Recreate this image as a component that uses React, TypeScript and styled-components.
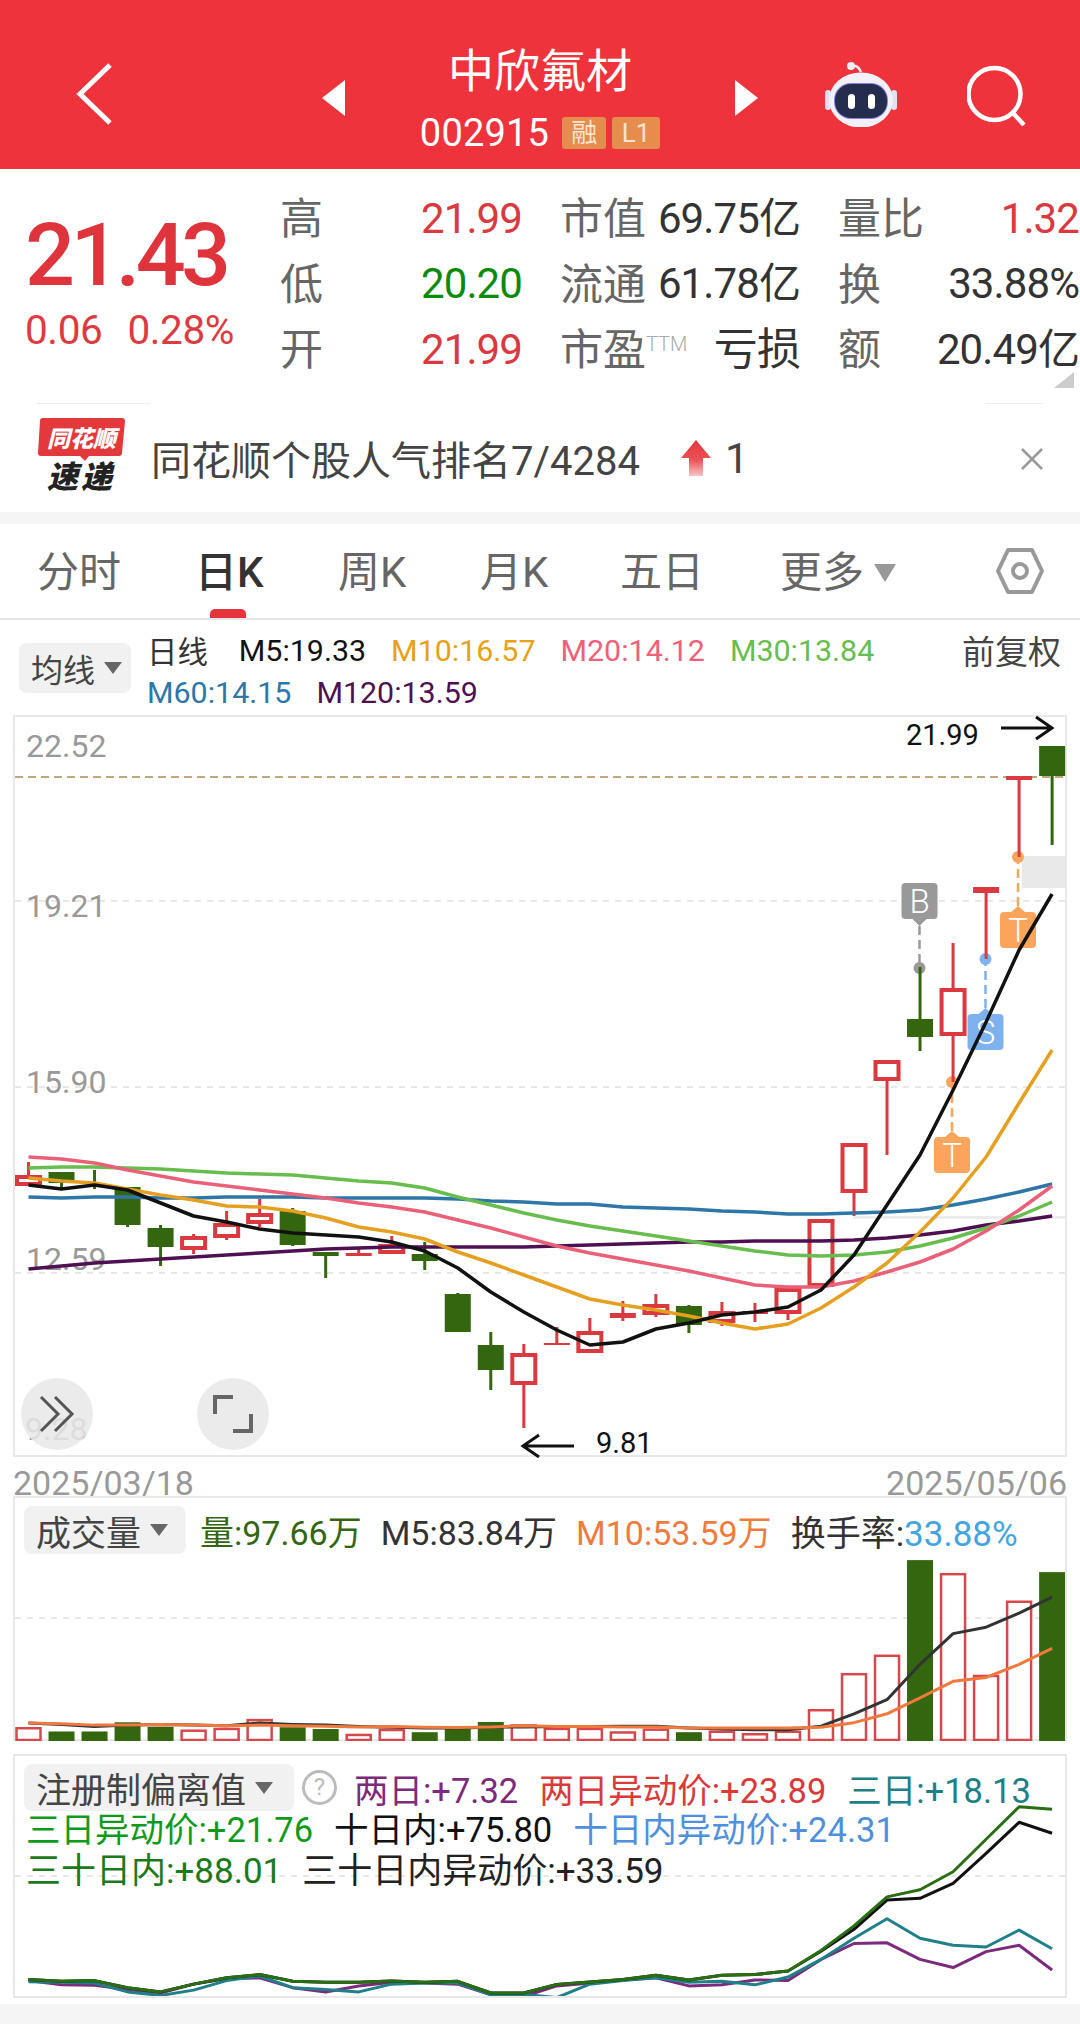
import React from "react";
import styled, { createGlobalStyle } from "styled-components";

const GlobalStyle = createGlobalStyle`
  html, body { margin: 0; padding: 0; background: #ffffff; }
  * { box-sizing: border-box; }
  body { font-family: Roboto, "Noto Sans CJK SC", sans-serif; color: #333333; }
`;

const RED = "#d9393f";
const GREEN = "#346610";

const Page = styled.div`
  width: 1080px;
  height: 2024px;
  overflow: hidden;
  background: #ffffff;
`;

/* ---------- header ---------- */
const Header = styled.header`
  height: 169px;
  background: #ef333c;
  display: grid;
  grid-template-columns: 322px 436px 322px;
  color: #ffffff;
`;

const BackSlot = styled.div`
  padding: 63px 0 0 76px;
`;

const TitleSlot = styled.div`
  display: flex;
  justify-content: space-between;
  align-items: flex-start;
`;

const Tri = styled.span<{ $dir: "left" | "right" }>`
  width: 0;
  height: 0;
  margin-top: 80px;
  border-top: 18px solid transparent;
  border-bottom: 18px solid transparent;
  ${(p) => (p.$dir === "left" ? "border-right: 23px solid #fff;" : "border-left: 23px solid #fff;")}
`;

const TitleBlock = styled.div`
  padding-top: 45px;
  display: flex;
  flex-direction: column;
  align-items: center;
`;

const StockName = styled.div`
  font-size: 46px;
  line-height: 52px;
`;

const CodeRow = styled.div`
  margin-top: 17px;
  display: flex;
  align-items: center;
  gap: 6px;
`;

const StockCode = styled.span`
  font-size: 38px;
  line-height: 38px;
  letter-spacing: 0.2px;
  margin-right: 7px;
`;

const Badge = styled.span<{ $w: number }>`
  width: ${(p) => p.$w}px;
  height: 32px;
  border-radius: 3px;
  background: #e58d4c;
  color: #fbe3cf;
  font-size: 26px;
  line-height: 32px;
  text-align: center;
`;

const ActionSlot = styled.div`
  padding: 62px 0 0 67px;
  display: flex;
  align-items: flex-start;
  gap: 70px;
`;

/* ---------- quote ---------- */
const Quote = styled.section`
  height: 235px;
  position: relative;
  display: flex;
`;

const PriceCol = styled.div`
  width: 280px;
  padding: 44px 0 0 25px;
`;

const Price = styled.div`
  font-size: 88px;
  line-height: 84px;
  font-weight: 500;
  letter-spacing: -4.6px;
  color: #e0343c;
`;

const Change = styled.div`
  margin-top: 13px;
  display: flex;
  gap: 25px;
  font-size: 40.5px;
  line-height: 40px;
  letter-spacing: -0.4px;
  color: #dd3b41;
`;

const StatGrid = styled.div`
  padding-top: 15px;
  display: grid;
  grid-template-columns: 242px 240px 241px;
  column-gap: 38px;
  grid-auto-rows: 65.5px;
  width: 800px;
`;

const StatCell = styled.div`
  display: flex;
  justify-content: space-between;
  align-items: center;
  white-space: nowrap;
`;

const StatLabel = styled.span`
  font-size: 43px;
  line-height: 60px;
  margin-top: 5px;
  color: #666666;
`;

const Ttm = styled.sup`
  font-size: 20px;
  font-weight: 300;
  color: #aaaaaa;
  vertical-align: 14px;
  line-height: 0;
`;

const StatValue = styled.span<{ $color?: string; $size?: number }>`
  font-size: ${(p) => p.$size ?? 42}px;
  line-height: 60px;
  margin-top: 4px;
  letter-spacing: -0.9px;
  color: ${(p) => p.$color ?? "#333333"};
`;

const CornerFold = styled.span`
  position: absolute;
  right: 6px;
  bottom: 16px;
  width: 0;
  height: 0;
  border-left: 20px solid transparent;
  border-bottom: 16px solid #cccccc;
`;

const ShortRule = styled.span<{ $left: number; $width: number }>`
  position: absolute;
  bottom: 0;
  left: ${(p) => p.$left}px;
  width: ${(p) => p.$width}px;
  height: 1px;
  background: #eeeeee;
`;

/* ---------- news strip ---------- */
const News = styled.section`
  height: 108px;
  padding-left: 37px;
  display: flex;
  align-items: center;
  position: relative;
`;

const LogoText = styled.text<{ $fill: string; $size: number; $track?: number }>`
  font-family: "Noto Sans CJK SC", sans-serif;
  font-weight: 900;
  font-style: italic;
  font-size: ${(p) => p.$size}px;
  letter-spacing: ${(p) => p.$track ?? 0}px;
  fill: ${(p) => p.$fill};
`;

const NewsText = styled.span`
  margin-left: 24px;
  font-size: 40px;
  color: #444444;
  white-space: nowrap;
`;

const NewsArrow = styled.svg`
  margin-left: 41px;
`;

const NewsCount = styled.span`
  margin-left: 14px;
  font-size: 42px;
  color: #444444;
`;

const CloseIcon = styled.svg`
  position: absolute;
  right: 36px;
  top: 43px;
`;

const Band = styled.div<{ $h: number; $mt?: number }>`
  height: ${(p) => p.$h}px;
  margin-top: ${(p) => p.$mt ?? 0}px;
  background: #f5f5f5;
`;

/* ---------- tabs ---------- */
const Tabs = styled.nav`
  height: 96px;
  padding-left: 37px;
  border-bottom: 2px solid #e6e6e6;
  display: grid;
  grid-template-columns: 158px 143px 142px 140px 160px 215px 1fr;
  align-items: center;
  position: relative;
`;

const Tab = styled.span<{ $active?: boolean }>`
  font-size: 42px;
  line-height: 48px;
  margin-top: 4px;
  display: inline-flex;
  align-items: center;
  color: ${(p) => (p.$active ? "#333333" : "#666666")};
  font-weight: ${(p) => (p.$active ? 500 : 400)};
`;

const TabCaret = styled.span`
  margin-left: 10px;
  width: 0;
  height: 0;
  border-left: 11px solid transparent;
  border-right: 11px solid transparent;
  border-top: 18px solid #999999;
`;

const TabMark = styled.span`
  position: absolute;
  left: 210px;
  bottom: 0;
  width: 36px;
  height: 9px;
  border-radius: 5px 5px 0 0;
  background: #e5343c;
`;

const HexIcon = styled.svg`
  margin-left: 1px;
`;

/* ---------- ma legend ---------- */
const MaLegend = styled.section`
  height: 95px;
  padding: 23px 19px 0;
  display: flex;
  align-items: flex-start;
`;

const Dropdown = styled.div<{ $w: number; $h: number; $size: number }>`
  width: ${(p) => p.$w}px;
  height: ${(p) => p.$h}px;
  flex: none;
  padding-left: 12px;
  border-radius: 8px;
  background: #f1f1f1;
  display: flex;
  align-items: center;
  font-size: ${(p) => p.$size}px;
  color: #444444;
  white-space: nowrap;
`;

const DropCaret = styled.span`
  margin-left: 9px;
  width: 0;
  height: 0;
  border-left: 9px solid transparent;
  border-right: 9px solid transparent;
  border-top: 12px solid #666666;
`;

const MaRows = styled.div`
  margin: -14px 0 0 16px;
  flex: 1;
`;

const MaRow = styled.div`
  height: 42px;
  display: flex;
  align-items: center;
  gap: 25px;
  white-space: nowrap;
  font-size: 30.4px;
`;

const MaItem = styled.span<{ $color: string }>`
  color: ${(p) => p.$color};
`;

const MaKind = styled.span`
  margin-right: 6px;
  color: #333333;
`;

const MaRight = styled.span`
  margin-left: auto;
  color: #444444;
  font-size: 33px;
`;

/* ---------- charts ---------- */
const ChartBox = styled.div`
  position: relative;
  margin: 0 13px;
  height: 742px;
  border: 2px solid #e8e8e8;
  svg { display: block; overflow: visible; }
`;

const AxisText = styled.text`
  font-size: 32px;
  fill: #999999;
`;

const NoteText = styled.text`
  font-size: 29px;
  fill: #111111;
`;

const MarkerText = styled.text`
  font-size: 33px;
  font-weight: 300;
  fill: #ffffff;
  text-anchor: middle;
`;

const RoundBtn = styled.div<{ $left: number }>`
  position: absolute;
  left: ${(p) => p.$left}px;
  top: 661px;
  width: 72px;
  height: 72px;
  border-radius: 50%;
  background: rgba(232, 232, 232, 0.85);
  display: flex;
  align-items: center;
  justify-content: center;
`;

const DateRow = styled.div`
  height: 39px;
  margin: 0 13px;
  padding-top: 7px;
  display: flex;
  justify-content: space-between;
  align-items: flex-start;
  font-size: 34px;
  line-height: 38px;
  color: #999999;
`;

const SubPanel = styled.div<{ $h: number; $mt: number }>`
  position: relative;
  margin: ${(p) => p.$mt}px 13px 0;
  height: ${(p) => p.$h}px;
  border: 2px solid #e8e8e8;
  svg { position: absolute; left: 0; top: 0; }
`;

const PanelRows = styled.div`
  position: relative;
  padding: 8px 0 0 9px;
`;

const PanelRow = styled.div<{ $h?: number; $pl?: number; $mt?: number; $size?: number; $gap?: number }>`
  display: flex;
  align-items: center;
  gap: ${(p) => p.$gap ?? 21}px;
  white-space: nowrap;
  height: ${(p) => p.$h ?? 39}px;
  margin-top: ${(p) => p.$mt ?? 0}px;
  padding-left: ${(p) => p.$pl ?? 0}px;
  font-size: ${(p) => p.$size ?? 34.5}px;
`;

const PanelText = styled.span<{ $color: string }>`
  color: ${(p) => p.$color};
`;

const TurnoverGroup = styled.span`
  font-size: 35px;
`;

const VolumeDrop = styled(Dropdown)`
  margin-right: -5px;
`;

const HelpDot = styled.span`
  width: 35px;
  height: 35px;
  margin: 0 -4px 0 -13px;
  border: 3px solid #bbbbbb;
  border-radius: 50%;
  color: #bbbbbb;
  font-size: 24px;
  line-height: 29px;
  text-align: center;
`;

/* ---------- chart data, page coordinates ---------- */
const cx = (i: number) => 28.5 + 33.02 * i;
const pts = (ys: number[]) => ys.map((y, i) => `${cx(i).toFixed(1)},${y}`).join(" ");

// [up, bodyTop, bodyBottom, high, low]
const candles: [boolean, number, number, number, number][] = [
  [true, 1175, 1186, 1162, 1186], [false, 1172, 1183, 1172, 1189], [false, 1184, 1185, 1170, 1189],
  [false, 1187, 1225, 1187, 1227], [false, 1228, 1247, 1225, 1266], [true, 1236, 1250, 1234, 1254],
  [true, 1223, 1238, 1211, 1240], [true, 1213, 1224, 1199, 1227], [false, 1211, 1245, 1208, 1246],
  [false, 1252, 1256, 1252, 1278], [true, 1253, 1256, 1247, 1256], [true, 1244, 1254, 1236, 1254],
  [false, 1254, 1261, 1242, 1270], [false, 1294, 1332, 1293, 1332], [false, 1345, 1370, 1332, 1390],
  [true, 1353, 1385, 1344, 1428], [true, 1343, 1345, 1327, 1345], [true, 1331, 1353, 1318, 1353],
  [true, 1313, 1318, 1301, 1321], [true, 1304, 1315, 1294, 1317], [false, 1306, 1325, 1305, 1333],
  [true, 1311, 1323, 1302, 1326], [true, 1311, 1314, 1303, 1322], [true, 1288, 1314, 1288, 1320],
  [true, 1219, 1287, 1219, 1287], [true, 1143, 1193, 1143, 1216], [true, 1060, 1081, 1060, 1155],
  [false, 1019, 1037, 967, 1051], [true, 988, 1036, 943, 1082], [true, 887, 893, 887, 959],
  [true, 776, 780, 778, 857], [false, 746, 776, 746, 845],
];

const m5 = [1185,1189,1185,1190,1203,1216,1222,1229,1233,1235,1237,1242,1251,1268,1292,1312,1330,1345,1342,1329,1323,1315,1312,1307,1290,1255,1205,1155,1090,1022,950,894];
const m10 = [1178,1181,1183,1189,1195,1200,1206,1207,1211,1218,1227,1232,1239,1252,1263,1275,1287,1299,1305,1310,1316,1323,1329,1324,1308,1287,1263,1232,1198,1157,1103,1050];
const m20 = [1157,1159,1163,1170,1176,1182,1186,1190,1194,1198,1203,1207,1212,1220,1228,1237,1246,1253,1259,1265,1271,1278,1285,1287,1287,1281,1272,1262,1249,1231,1210,1186];
const m30 = [1168,1167,1167,1168,1169,1171,1173,1174,1175,1178,1181,1183,1188,1197,1205,1213,1220,1226,1231,1236,1241,1246,1251,1255,1256,1255,1252,1246,1238,1228,1216,1202];
const m60 = [1197,1198,1197,1197,1198,1198,1197,1197,1197,1198,1198,1198,1198,1199,1201,1202,1204,1204,1207,1208,1209,1211,1212,1214,1214,1213,1212,1210,1205,1199,1192,1184];
const m120 = [1269,1266,1263,1261,1259,1257,1255,1253,1251,1249,1248,1247,1247,1247,1247,1247,1246,1245,1244,1243,1242,1242,1241,1241,1241,1240,1238,1235,1231,1225,1221,1216];

// volume: [up, top in zoom units]
const vTop = (v: number) => 1470 + v / 2.83;
const volumes: [boolean, number][] = [
  [true,728],[false,740],[false,740],[false,714],[false,727],[true,735],[true,730],[true,705],
  [false,728],[false,733],[true,747],[true,733],[false,742],[false,733],[false,713],[true,720],
  [true,730],[true,730],[true,740],[true,732],[false,742],[true,738],[true,745],[true,738],
  [true,677],[true,575],[true,523],[false,255],[true,292],[true,580],[true,370],[false,289],
];
const vm5 = [716,720,726,722,720,722,724,716,720,722,726,728,730,730,728,727,726,726,725,725,730,733,735,735,725,690,650,550,463,445,405,360].map(vTop);
const vm10 = [716,718,722,722,720,722,724,722,724,725,727,726,728,729,727,724,726,726,727,727,730,730,730,730,728,715,690,645,598,587,550,505].map(vTop);

const dGreen = [1442,1447,1445,1465,1477,1455,1437,1428,1447,1450,1450,1446,1450,1447,1480,1480,1456,1449,1442,1430,1443,1430,1428,1418,1360,1290,1208,1188,1137,1045,953,960].map(vTop);
const dBlack = [1442,1447,1445,1465,1477,1455,1437,1428,1447,1450,1450,1446,1450,1447,1480,1480,1456,1449,1442,1430,1443,1430,1428,1418,1362,1300,1217,1212,1170,1085,997,1028].map(vTop);
const dTeal = [1448,1450,1452,1477,1487,1472,1445,1432,1465,1470,1477,1455,1452,1452,1485,1484,1493,1455,1445,1437,1450,1447,1457,1435,1385,1325,1270,1325,1345,1350,1302,1355].map(vTop);
const dPurple = [1445,1457,1458,1470,1480,1455,1440,1437,1465,1477,1460,1450,1452,1455,1485,1490,1460,1452,1443,1437,1460,1457,1443,1445,1385,1340,1338,1385,1408,1363,1345,1415].map(vTop);

const MaLine = ({ ys, color, w = 3.5 }: { ys: number[]; color: string; w?: number }) => (
  <polyline points={pts(ys)} fill="none" stroke={color} strokeWidth={w} strokeLinejoin="round" />
);

const Candle = ({ i, c }: { i: number; c: [boolean, number, number, number, number] }) => {
  const [up, top, bottom, high, low] = c;
  const x = cx(i);
  const color = up ? RED : GREEN;
  const flat = bottom - top < 8;
  return (
    <g>
      <line x1={x} x2={x} y1={high} y2={low} stroke={color} strokeWidth={3} />
      {i === 2 ? null : up && !flat ? (
        <rect x={x - 11.5} y={top + 2} width={23} height={bottom - top - 4} fill="#fff" stroke={color} strokeWidth={4} />
      ) : (
        <rect x={x - 13} y={top} width={26} height={bottom - top} fill={color} />
      )}
    </g>
  );
};

const Marker = ({ x, top, label, color, dotY, below }: { x: number; top: number; label: string; color: string; dotY: number; below?: boolean }) => {
  const tip = below ? `${x - 7},${top + 36} ${x + 7},${top + 36} ${x},${top + 43}` : `${x - 7},${top} ${x + 7},${top} ${x},${top - 6}`;
  return (
    <g>
      <line x1={x} x2={x} y1={below ? top + 43 : top - 6} y2={dotY} stroke={color} strokeWidth={2.5} strokeDasharray="9 5" />
      <circle cx={x} cy={dotY} r={6} fill={color} />
      <rect x={x - 18} y={top} width={36} height={36} rx={4} fill={color} />
      <polygon points={tip} fill={color} />
      <MarkerText x={x} y={top + 30}>{label}</MarkerText>
    </g>
  );
};

const KlineChart = () => (
  <svg width={1050} height={738} viewBox="15 717 1050 738">
    {[901, 1087, 1273].map((y) => (
      <line key={y} x1={15} x2={1065} y1={y} y2={y} stroke="#e8e8e8" strokeWidth={2} strokeDasharray="6 6" />
    ))}
    <AxisText x={26} y={757}>22.52</AxisText>
    <AxisText x={26} y={917}>19.21</AxisText>
    <AxisText x={26} y={1093}>15.90</AxisText>
    <AxisText x={26} y={1270}>12.59</AxisText>
    <AxisText x={25} y={1440}>9.28</AxisText>
    <rect x={1022} y={856} width={43} height={32} fill="#e9e9e9" />
    <rect x={853} y={1216} width={212} height={3} fill="#ececec" />
    <line x1={15} x2={1065} y1={777} y2={777} stroke="#c4a67c" strokeWidth={2} strokeDasharray="8 5" />

    <Marker x={919.5} top={883} label="B" color="#999999" dotY={968} below />
    <Marker x={1018} top={912} label="T" color="#fba55c" dotY={857} />
    <Marker x={985.5} top={1014} label="S" color="#7eb2ef" dotY={959} />
    <Marker x={952} top={1137} label="T" color="#fba55c" dotY={1082} />

    {candles.map((c, i) => (
      <Candle key={i} i={i} c={c} />
    ))}

    <MaLine ys={m120} color="#4f1052" />
    <MaLine ys={m60} color="#2f76a8" />
    <MaLine ys={m30} color="#68bd4f" />
    <MaLine ys={m20} color="#ea6079" />
    <MaLine ys={m10} color="#e5a021" />
    <MaLine ys={m5} color="#111111" />

    <NoteText x={906} y={745}>21.99</NoteText>
    <path d="M1001 728H1051M1036 717L1052 728L1036 739" fill="none" stroke="#111" strokeWidth={3} />
    <NoteText x={596} y={1453}>9.81</NoteText>
    <path d="M574 1446H524M539 1435L523 1446L539 1457" fill="none" stroke="#111" strokeWidth={3} />
  </svg>
);

const VolumeChart = () => (
  <svg width={1050} height={243} viewBox="15 1498 1050 243">
    <line x1={15} x2={1065} y1={1618} y2={1618} stroke="#e8e8e8" strokeWidth={2} strokeDasharray="6 6" />
    {volumes.map(([up, v], i) => {
      const x = cx(i);
      const top = vTop(v);
      return up ? (
        <rect key={i} x={x - 12} y={top + 1} width={24} height={1741 - top - 2} fill="#fff" stroke="#d8474c" strokeWidth={2.5} />
      ) : (
        <rect key={i} x={x - 13} y={top} width={26} height={1741 - top} fill={GREEN} />
      );
    })}
    <MaLine ys={vm5} color="#333333" w={3} />
    <MaLine ys={vm10} color="#f0793d" w={3} />
  </svg>
);

const DeviationChart = () => (
  <svg width={1050} height={240} viewBox="15 1756 1050 240">
    <line x1={15} x2={1065} y1={1876} y2={1876} stroke="#e8e8e8" strokeWidth={2} strokeDasharray="6 6" />
    <MaLine ys={dPurple} color="#7c2a7e" w={3} />
    <MaLine ys={dTeal} color="#1f808a" w={3} />
    <MaLine ys={dBlack} color="#111111" w={3} />
    <MaLine ys={dGreen} color="#2a6e14" w={3} />
  </svg>
);

const RobotIcon = () => (
  <svg width={72} height={65} viewBox="0 0 72 65">
    <path d="M24 7C28 2 33 3 36 10" fill="none" stroke="#f4eaf2" strokeWidth={2.5} />
    <circle cx={26} cy={4} r={4} fill="#f6eef4" />
    <rect x={0} y={28} width={6} height={20} rx={3} fill="#e4e0f2" />
    <rect x={66} y={28} width={6} height={20} rx={3} fill="#e4e0f2" />
    <ellipse cx={36} cy={38} rx={32} ry={27.5} fill="#f3f0f8" />
    <rect x={9} y={21} width={54} height={36} rx={17} fill="#8a7fe0" />
    <rect x={10} y={22} width={52} height={34} rx={16} fill="#242d4d" />
    <rect x={23} y={32} width={7} height={15} rx={3.5} fill="#fff" />
    <rect x={43} y={32} width={7} height={15} rx={3.5} fill="#fff" />
  </svg>
);

const SearchIcon = () => (
  <svg width={60} height={64} viewBox="0 0 60 64">
    <circle cx={27.5} cy={32} r={26} fill="none" stroke="#fff" strokeWidth={4.5} />
    <line x1={46} y1={51} x2={57} y2={63} stroke="#fff" strokeWidth={4.5} />
  </svg>
);

const NewsLogo = () => (
  <svg width={90} height={84} viewBox="37 420 90 84">
    <path d="M43 422H122Q125 422 125 425L122 457Q122 460 119 460H89L85 465L80 460H41Q38 460 38 457L40 425Q40 422 43 422Z" fill="#e4393c" />
    <LogoText x={47} y={451} $fill="#ffffff" $size={23}>同花顺</LogoText>
    <LogoText x={47} y={492} $fill="#222222" $size={31} $track={3}>速递</LogoText>
  </svg>
);

export default function App() {
  return (
    <Page>
      <GlobalStyle />
      <Header>
        <BackSlot>
          <svg width={36} height={62} viewBox="0 0 36 62">
            <path d="M34 2L4 31L34 60" fill="none" stroke="#fff" strokeWidth={5} />
          </svg>
        </BackSlot>
        <TitleSlot>
          <Tri $dir="left" />
          <TitleBlock>
            <StockName>中欣氟材</StockName>
            <CodeRow>
              <StockCode>002915</StockCode>
              <Badge $w={44}>融</Badge>
              <Badge $w={48}>L1</Badge>
            </CodeRow>
          </TitleBlock>
          <Tri $dir="right" />
        </TitleSlot>
        <ActionSlot>
          <RobotIcon />
          <SearchIcon />
        </ActionSlot>
      </Header>

      <Quote>
        <PriceCol>
          <Price>21.43</Price>
          <Change>
            <span>0.06</span>
            <span>0.28%</span>
          </Change>
        </PriceCol>
        <StatGrid>
          <StatCell><StatLabel>高</StatLabel><StatValue $color={RED}>21.99</StatValue></StatCell>
          <StatCell><StatLabel>市值</StatLabel><StatValue>69.75亿</StatValue></StatCell>
          <StatCell><StatLabel>量比</StatLabel><StatValue $color={RED}>1.32</StatValue></StatCell>
          <StatCell><StatLabel>低</StatLabel><StatValue $color="#0b8a0b">20.20</StatValue></StatCell>
          <StatCell><StatLabel>流通</StatLabel><StatValue>61.78亿</StatValue></StatCell>
          <StatCell><StatLabel>换</StatLabel><StatValue>33.88%</StatValue></StatCell>
          <StatCell><StatLabel>开</StatLabel><StatValue $color={RED}>21.99</StatValue></StatCell>
          <StatCell><StatLabel>市盈<Ttm>TTM</Ttm></StatLabel><StatValue $size={44}>亏损</StatValue></StatCell>
          <StatCell><StatLabel>额</StatLabel><StatValue>20.49亿</StatValue></StatCell>
        </StatGrid>
        <CornerFold />
        <ShortRule $left={36} $width={114} />
        <ShortRule $left={985} $width={58} />
      </Quote>

      <News>
        <NewsLogo />
        <NewsText>同花顺个股人气排名7/4284</NewsText>
        <NewsArrow width={30} height={36} viewBox="0 0 30 36">
          <defs>
            <linearGradient id="newsUp" x1="0" y1="0" x2="0" y2="1">
              <stop offset="0" stopColor="#e5343c" />
              <stop offset="0.55" stopColor="#ea5257" />
              <stop offset="1" stopColor="#f7c4c6" />
            </linearGradient>
          </defs>
          <path d="M15 0L30 18H22V36H8V18H0Z" fill="url(#newsUp)" />
        </NewsArrow>
        <NewsCount>1</NewsCount>
        <CloseIcon width={24} height={24} viewBox="0 0 24 24">
          <path d="M2 2L22 22M22 2L2 22" stroke="#999" strokeWidth={2.5} />
        </CloseIcon>
      </News>
      <Band $h={12} />

      <Tabs>
        <Tab>分时</Tab>
        <Tab $active>日K</Tab>
        <Tab>周K</Tab>
        <Tab>月K</Tab>
        <Tab>五日</Tab>
        <Tab>更多<TabCaret /></Tab>
        <HexIcon width={48} height={46} viewBox="0 0 48 46">
          <path d="M12 2H36L46 23L36 44H12L2 23Z" fill="none" stroke="#999" strokeWidth={4} strokeLinejoin="round" />
          <circle cx={24} cy={23} r={7} fill="none" stroke="#999" strokeWidth={4} />
        </HexIcon>
        <TabMark />
      </Tabs>

      <MaLegend>
        <Dropdown $w={112} $h={50} $size={32}>
          均线<DropCaret />
        </Dropdown>
        <MaRows>
          <MaRow>
            <MaKind>日线</MaKind>
            <MaItem $color="#111111">M5:19.33</MaItem>
            <MaItem $color="#e8a117">M10:16.57</MaItem>
            <MaItem $color="#ee6179">M20:14.12</MaItem>
            <MaItem $color="#67bd4e">M30:13.84</MaItem>
            <MaRight>前复权</MaRight>
          </MaRow>
          <MaRow>
            <MaItem $color="#2c77ab">M60:14.15</MaItem>
            <MaItem $color="#4f1052">M120:13.59</MaItem>
          </MaRow>
        </MaRows>
      </MaLegend>

      <ChartBox>
        <KlineChart />
        <RoundBtn $left={6}>
          <svg width={36} height={36} viewBox="0 0 36 36">
            <path d="M2 1L19 18L2 35M16 1L33 18L16 35" fill="none" stroke="#555" strokeWidth={3} />
          </svg>
        </RoundBtn>
        <RoundBtn $left={182}>
          <svg width={40} height={38} viewBox="0 0 40 38">
            <path d="M2 19V2H20M38 19V36H20" fill="none" stroke="#666" strokeWidth={4} />
          </svg>
        </RoundBtn>
      </ChartBox>
      <DateRow>
        <span>2025/03/18</span>
        <span>2025/05/06</span>
      </DateRow>

      <SubPanel $h={245} $mt={0}>
        <VolumeChart />
        <PanelRows>
          <PanelRow $h={48} $size={34} $gap={19}>
            <VolumeDrop $w={162} $h={48} $size={35}>成交量<DropCaret /></VolumeDrop>
            <PanelText $color={GREEN}>量:97.66万</PanelText>
            <PanelText $color="#333333">M5:83.84万</PanelText>
            <PanelText $color="#ef7b3e">M10:53.59万</PanelText>
            <TurnoverGroup>
              <PanelText $color="#333333">换手率:</PanelText>
              <PanelText $color="#42a5e0">33.88%</PanelText>
            </TurnoverGroup>
          </PanelRow>
        </PanelRows>
      </SubPanel>

      <SubPanel $h={244} $mt={13}>
        <DeviationChart />
        <PanelRows>
          <PanelRow $h={47}>
            <Dropdown $w={270} $h={47} $size={35}>注册制偏离值<DropCaret /></Dropdown>
            <HelpDot>?</HelpDot>
            <PanelText $color="#7d2a7d">两日:+7.32</PanelText>
            <PanelText $color="#d93a3a">两日异动价:+23.89</PanelText>
            <PanelText $color="#1f7f86">三日:+18.13</PanelText>
          </PanelRow>
          <PanelRow $pl={2} $mt={-4}>
            <PanelText $color="#0f9a1c">三日异动价:+21.76</PanelText>
            <PanelText $color="#111111">十日内:+75.80</PanelText>
            <PanelText $color="#4f90dd">十日内异动价:+24.31</PanelText>
          </PanelRow>
          <PanelRow $pl={2} $mt={2} $size={35} $gap={20}>
            <PanelText $color="#1b7a1b">三十日内:+88.01</PanelText>
            <PanelText $color="#222222">三十日内异动价:+33.59</PanelText>
          </PanelRow>
        </PanelRows>
      </SubPanel>
      <Band $h={20} $mt={6} />
    </Page>
  );
}
